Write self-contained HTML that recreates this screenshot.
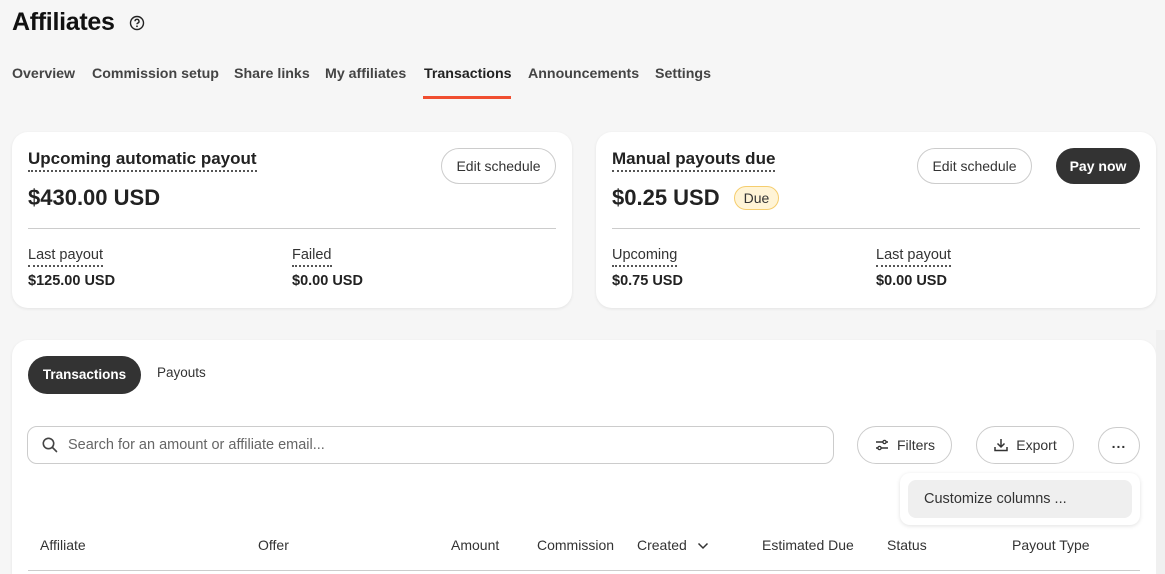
<!DOCTYPE html>
<html><head><style>
*{box-sizing:border-box;margin:0;padding:0}
html,body{width:1165px;height:574px;overflow:hidden}
body{background:#f6f6f6;font-family:"Liberation Sans",sans-serif;color:#222;position:relative}
.abs{position:absolute;white-space:nowrap}
h1{position:absolute;left:12px;top:8px;font-size:25px;font-weight:bold;color:#111;letter-spacing:-0.3px}
.tab{position:absolute;top:66px;font-size:14.2px;font-weight:bold;color:#444}
.card{position:absolute;background:#fff;border-radius:16px;box-shadow:0 1px 3px rgba(0,0,0,0.08)}
.btn{position:absolute;border:1px solid #ccc;border-radius:20px;background:#fff;font-size:14px;color:#333;display:flex;align-items:center;justify-content:center;gap:7px}
.dot{border-bottom:2px dotted #555;padding-bottom:2px}
.th{position:absolute;top:537px;font-size:14px;color:#333}
</style></head><body>
<h1>Affiliates</h1>
<svg class="abs" style="left:129px;top:15px" width="16" height="16" viewBox="0 0 16 16"><circle cx="8" cy="8" r="6.5" fill="none" stroke="#222" stroke-width="1.4"/><path d="M6 6.3a2 2 0 1 1 2.6 1.9c-.5.2-.6.5-.6 1.1" fill="none" stroke="#222" stroke-width="1.4"/><circle cx="8" cy="11.3" r=".9" fill="#222"/></svg>
<div class="tab" style="left:12px">Overview</div>
<div class="tab" style="left:92px">Commission setup</div>
<div class="tab" style="left:234px">Share links</div>
<div class="tab" style="left:325px">My affiliates</div>
<div class="tab" style="left:424px;color:#222">Transactions</div>
<div class="tab" style="left:528px">Announcements</div>
<div class="tab" style="left:655px">Settings</div>
<div class="abs" style="left:423px;top:96px;width:88px;height:3px;background:#f04e30"></div>

<div class="card" style="left:12px;top:132px;width:560px;height:176px">
 <div class="abs" style="left:16px;top:17px;font-size:17px;font-weight:bold;color:#222"><span class="dot">Upcoming automatic payout</span></div>
 <div class="abs" style="left:16px;top:53px;font-size:22px;font-weight:bold;color:#222">$430.00 USD</div>
 <div class="btn" style="left:429px;top:16px;width:115px;height:36px">Edit schedule</div>
 <div class="abs" style="left:16px;top:96px;width:528px;height:1px;background:#ccc"></div>
 <div class="abs" style="left:16px;top:115px;font-size:14.5px;color:#333"><span class="dot">Last payout</span></div>
 <div class="abs" style="left:16px;top:141px;font-size:14.5px;font-weight:bold;color:#222">$125.00 USD</div>
 <div class="abs" style="left:280px;top:115px;font-size:14.5px;color:#333"><span class="dot">Failed</span></div>
 <div class="abs" style="left:280px;top:141px;font-size:14.5px;font-weight:bold;color:#222">$0.00 USD</div>
</div>

<div class="card" style="left:596px;top:132px;width:560px;height:176px">
 <div class="abs" style="left:16px;top:17px;font-size:17px;font-weight:bold;color:#222"><span class="dot">Manual payouts due</span></div>
 <div class="abs" style="left:16px;top:53px;font-size:22px;font-weight:bold;color:#222">$0.25 USD</div>
 <div class="abs" style="left:138px;top:54px;width:45px;height:24px;border:1px solid #f5cd6e;background:#fff4d6;border-radius:12px;font-size:14px;color:#333;text-align:center;line-height:22px">Due</div>
 <div class="btn" style="left:321px;top:16px;width:115px;height:36px">Edit schedule</div>
 <div class="btn" style="left:460px;top:16px;width:84px;height:36px;background:#333;border-color:#333;color:#fff;font-weight:bold">Pay now</div>
 <div class="abs" style="left:16px;top:96px;width:528px;height:1px;background:#ccc"></div>
 <div class="abs" style="left:16px;top:115px;font-size:14.5px;color:#333"><span class="dot">Upcoming</span></div>
 <div class="abs" style="left:16px;top:141px;font-size:14.5px;font-weight:bold;color:#222">$0.75 USD</div>
 <div class="abs" style="left:280px;top:115px;font-size:14.5px;color:#333"><span class="dot">Last payout</span></div>
 <div class="abs" style="left:280px;top:141px;font-size:14.5px;font-weight:bold;color:#222">$0.00 USD</div>
</div>

<div class="card" style="left:12px;top:340px;width:1144px;height:234px;border-radius:16px 16px 0 0"></div>
<div class="abs" style="left:28px;top:356px;width:113px;height:38px;background:#333;border-radius:19px;color:#fff;font-size:13.5px;font-weight:bold;text-align:center;line-height:38px">Transactions</div>
<div class="abs" style="left:157px;top:365px;font-size:13.5px;color:#333">Payouts</div>

<div class="abs" style="left:27px;top:426px;width:807px;height:38px;border:1px solid #ccc;border-radius:10px;background:#fff"></div>
<svg class="abs" style="left:41px;top:436px" width="18" height="18" viewBox="0 0 18 18"><circle cx="7.5" cy="7.5" r="5.2" fill="none" stroke="#444" stroke-width="1.6"/><path d="M11.5 11.5l4 4" stroke="#444" stroke-width="1.6" stroke-linecap="round"/></svg>
<div class="abs" style="left:68px;top:437px;font-size:14.5px;color:#666">Search for an amount or affiliate email...</div>

<div class="btn" style="left:857px;top:426px;width:95px;height:38px"><svg width="16" height="14" viewBox="0 0 16 14"><path d="M2 4h7M12 4h2M2 10h2M7 10h7" stroke="#333" stroke-width="1.4"/><circle cx="10.5" cy="4" r="1.6" fill="none" stroke="#333" stroke-width="1.3"/><circle cx="5.5" cy="10" r="1.6" fill="none" stroke="#333" stroke-width="1.3"/></svg>Filters</div>
<div class="btn" style="left:976px;top:426px;width:98px;height:38px"><svg width="16" height="16" viewBox="0 0 16 16"><path d="M8 2v8M4.5 6.5L8 10l3.5-3.5M2 10v3.5h12V10" fill="none" stroke="#333" stroke-width="1.5"/></svg>Export</div>
<div class="btn" style="left:1098px;top:427px;width:42px;height:37px;font-weight:bold;letter-spacing:1px;padding-bottom:6px">...</div>

<div class="abs" style="left:900px;top:473px;width:240px;height:52px;background:#fff;border-radius:10px;box-shadow:0 1px 4px rgba(0,0,0,0.12)"></div>
<div class="abs" style="left:908px;top:480px;width:224px;height:38px;background:#efefef;border-radius:8px;font-size:14.5px;color:#333;line-height:38px;padding-left:16px">Customize columns ...</div>

<div class="th" style="left:40px">Affiliate</div>
<div class="th" style="left:258px">Offer</div>
<div class="th" style="left:451px">Amount</div>
<div class="th" style="left:537px">Commission</div>
<div class="th" style="left:637px">Created</div>
<svg class="abs" style="left:697px;top:542px" width="12" height="8" viewBox="0 0 12 8"><path d="M1.5 1.5L6 6l4.5-4.5" fill="none" stroke="#333" stroke-width="1.5"/></svg>
<div class="th" style="left:762px">Estimated Due</div>
<div class="th" style="left:887px">Status</div>
<div class="th" style="left:1012px">Payout Type</div>
<div class="abs" style="left:28px;top:570px;width:1112px;height:1px;background:#ccc"></div>
<div class="abs" style="left:1156px;top:330px;width:9px;height:244px;background:#f0f0f0"></div>
</body></html>
